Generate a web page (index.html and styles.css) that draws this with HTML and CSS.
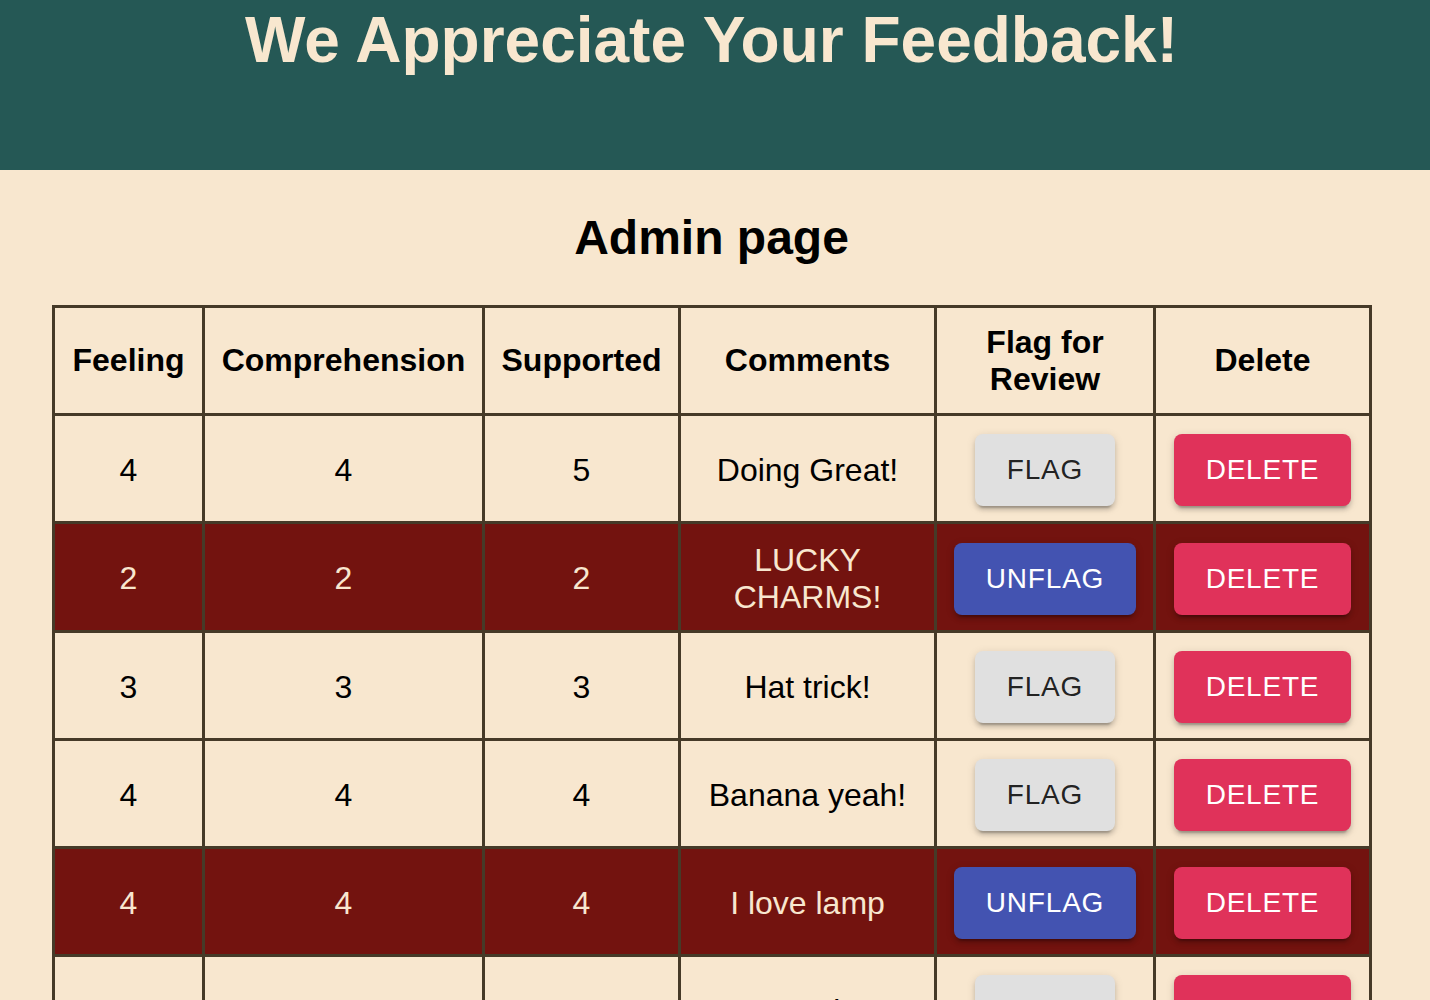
FILE: index.html
```html
<!DOCTYPE html>
<html lang="en">
<head>
<meta charset="utf-8">
<title>Admin page</title>
<link rel="stylesheet" href="styles.css">
</head>
<body>
<header class="app-header">
  <h1 class="app-title">We Appreciate Your Feedback!</h1>
</header>
<main class="admin">
  <h2 class="admin-title">Admin page</h2>
  <table class="feedback-table">
    <colgroup>
      <col class="c-feeling">
      <col class="c-comp">
      <col class="c-supp">
      <col class="c-comments">
      <col class="c-flag">
      <col class="c-delete">
    </colgroup>
    <thead>
      <tr>
        <th>Feeling</th>
        <th>Comprehension</th>
        <th>Supported</th>
        <th>Comments</th>
        <th>Flag for Review</th>
        <th>Delete</th>
      </tr>
    </thead>
    <tbody>
      <tr>
        <td>4</td><td>4</td><td>5</td><td>Doing Great!</td>
        <td><button class="btn btn-flag">FLAG</button></td>
        <td><button class="btn btn-delete">DELETE</button></td>
      </tr>
      <tr class="flagged">
        <td>2</td><td>2</td><td>2</td><td>LUCKY CHARMS!</td>
        <td><button class="btn btn-unflag">UNFLAG</button></td>
        <td><button class="btn btn-delete">DELETE</button></td>
      </tr>
      <tr>
        <td>3</td><td>3</td><td>3</td><td>Hat trick!</td>
        <td><button class="btn btn-flag">FLAG</button></td>
        <td><button class="btn btn-delete">DELETE</button></td>
      </tr>
      <tr>
        <td>4</td><td>4</td><td>4</td><td>Banana yeah!</td>
        <td><button class="btn btn-flag">FLAG</button></td>
        <td><button class="btn btn-delete">DELETE</button></td>
      </tr>
      <tr class="flagged">
        <td>4</td><td>4</td><td>4</td><td>I love lamp</td>
        <td><button class="btn btn-unflag">UNFLAG</button></td>
        <td><button class="btn btn-delete">DELETE</button></td>
      </tr>
      <tr>
        <td>3</td><td>4</td><td>4</td><td>Every day!</td>
        <td><button class="btn btn-flag">FLAG</button></td>
        <td><button class="btn btn-delete">DELETE</button></td>
      </tr>
    </tbody>
  </table>
</main>
</body>
</html>
```
FILE: styles.css
```css
html, body {
  margin: 0;
  padding: 0;
}
body {
  background: #f8e7cf;
  font-family: "Liberation Sans", Arial, Helvetica, sans-serif;
  color: #000;
}
.app-header {
  background: #255855;
  height: 170px;
  box-sizing: border-box;
  padding: 3px 7px 0 0;
}
.app-title {
  margin: 0;
  text-align: center;
  font-size: 64px;
  font-weight: bold;
  color: #f8e7cf;
  line-height: normal;
}
.admin {
  padding: 0 59px 40px 52px;
}
.admin-title {
  margin: 40px 0 40px;
  text-align: center;
  font-size: 48px;
  font-weight: bold;
  line-height: normal;
}
.feedback-table {
  width: 1317px;
  border-collapse: collapse;
  table-layout: fixed;
  border: 3px solid #463a28;
}
.c-feeling { width: 150px; }
.c-comp { width: 280px; }
.c-supp { width: 196px; }
.c-comments { width: 256px; }
.c-flag { width: 219px; }
.c-delete { width: 216px; }
.feedback-table th,
.feedback-table td {
  border: 3px solid #463a28;
  padding: 16px;
  text-align: center;
  vertical-align: middle;
  font-size: 32px;
  line-height: 36.5px;
}
.feedback-table th {
  font-weight: bold;
}
.feedback-table td {
  font-weight: normal;
  padding-top: 18px;
  padding-bottom: 15px;
}
.flagged td {
  background: #73130f;
  color: #f8e7cf;
}
.btn {
  display: inline-block;
  border: 0;
  border-radius: 8px;
  padding: 12px 32px;
  font-family: "Liberation Sans", Arial, Helvetica, sans-serif;
  font-size: 28px;
  line-height: 48px;
  letter-spacing: 0.8px;
  font-weight: normal;
  cursor: pointer;
  vertical-align: middle;
  box-shadow: 0 6px 2px -4px rgba(0,0,0,0.2), 0 4px 4px 0 rgba(0,0,0,0.14), 0 2px 10px 0 rgba(0,0,0,0.12);
}
.btn-flag {
  background: #e0e0e0;
  color: rgba(0,0,0,0.87);
}
.btn-unflag {
  background: #4353b1;
  color: #fff;
}
.btn-delete {
  background: #e0325a;
  color: #fff;
}
```
